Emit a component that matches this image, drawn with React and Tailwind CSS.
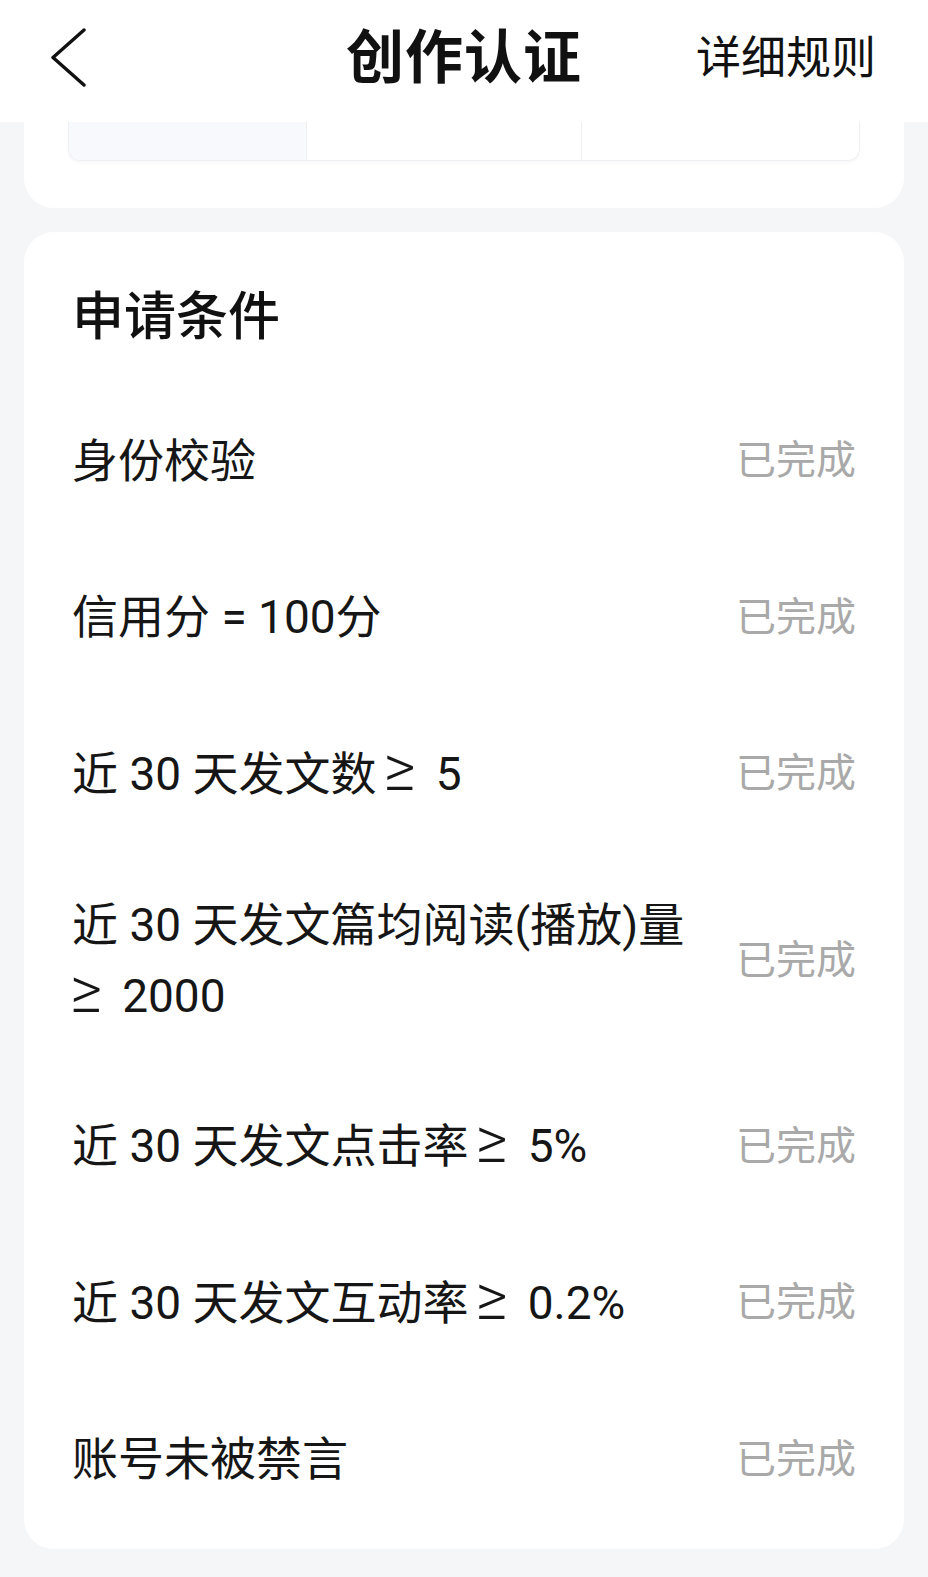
const conditions = [
  { label: "身份校验" },
  { label: "信用分 = 100分" },
  { label: "近 30 天发文数 ≥ 5" },
  { label: "近 30 天发文篇均阅读(播放)量", second: "≥ 2000" },
  { label: "近 30 天发文点击率 ≥ 5%" },
  { label: "近 30 天发文互动率 ≥ 0.2%" },
  { label: "账号未被禁言" },
];

const font = {
  fontFamily: 'Roboto, "Noto Sans CJK SC", "Noto Sans", sans-serif',
};

// the ≥ sign in the reference is tall and thin, followed by a wide gap
function Label({ text }) {
  const m = text.match(/\s?≥\s/);
  if (!m) return text;
  const before = text.slice(0, m.index);
  const after = text.slice(m.index + m[0].length);
  return (
    <>
      {before}
      <span
        className={`inline-block text-[62px] font-light leading-[0.5] ${
          before ? "ml-[7px]" : "-ml-[2px]"
        } mr-[20px]`}
      >
        ≥
      </span>
      {after}
    </>
  );
}

export default function App() {
  return (
    <div
      className="min-h-[1577px] w-[928px] bg-[#f5f6f8] text-[#111]"
      style={font}
    >
      {/* top bar */}
      <header className="grid h-[122px] grid-cols-[1fr_auto_1fr] items-center bg-white pb-[6px]">
        <div className="pl-[49px]">
          <svg width="38" height="60" viewBox="0 0 38 60" fill="none">
            <polyline
              points="35,2 4,29.5 35,57"
              stroke="#111"
              strokeWidth="3.4"
              strokeLinecap="round"
              strokeLinejoin="round"
            />
          </svg>
        </div>
        <h1 className="text-[58px] font-bold leading-none tracking-[1px]">
          创作认证
        </h1>
        <div className="flex justify-end pr-[52px]">
          <span className="text-[45px] leading-none">详细规则</span>
        </div>
      </header>

      {/* previous card, scrolled under the bar */}
      <div className="mx-[24px] rounded-b-[30px] bg-white px-[44px] pb-[47px]">
        <div className="grid h-[39px] grid-cols-[237px_275px_1fr] overflow-hidden rounded-b-[12px] border-x border-b border-[#eeeff2] shadow-[0_2px_3px_rgba(0,0,0,0.03)]">
          <div className="bg-[#f8f9fc]" />
          <div className="border-l border-[#eeeff2]" />
          <div className="border-l border-[#eeeff2]" />
        </div>
      </div>

      {/* conditions */}
      <section className="mx-[24px] mt-[24px] rounded-[30px] bg-white px-[48px] pb-[14px] pt-[50px]">
        <h2 className="text-[52px] font-medium leading-[72px]">申请条件</h2>
        <div className="mt-[26px]">
          {conditions.map((c) => (
            <div
              key={c.label}
              className="flex min-h-[156.5px] items-center justify-between pb-[34px] pt-[40px]"
            >
              <p className="text-[46px] leading-[71px] text-[#161616]">
                <Label text={c.label} />
                {c.second && (
                  <>
                    <br />
                    <Label text={c.second} />
                  </>
                )}
              </p>
              <span className="shrink-0 text-[40px] leading-none text-[#a9a9a9]">
                已完成
              </span>
            </div>
          ))}
        </div>
      </section>
    </div>
  );
}
